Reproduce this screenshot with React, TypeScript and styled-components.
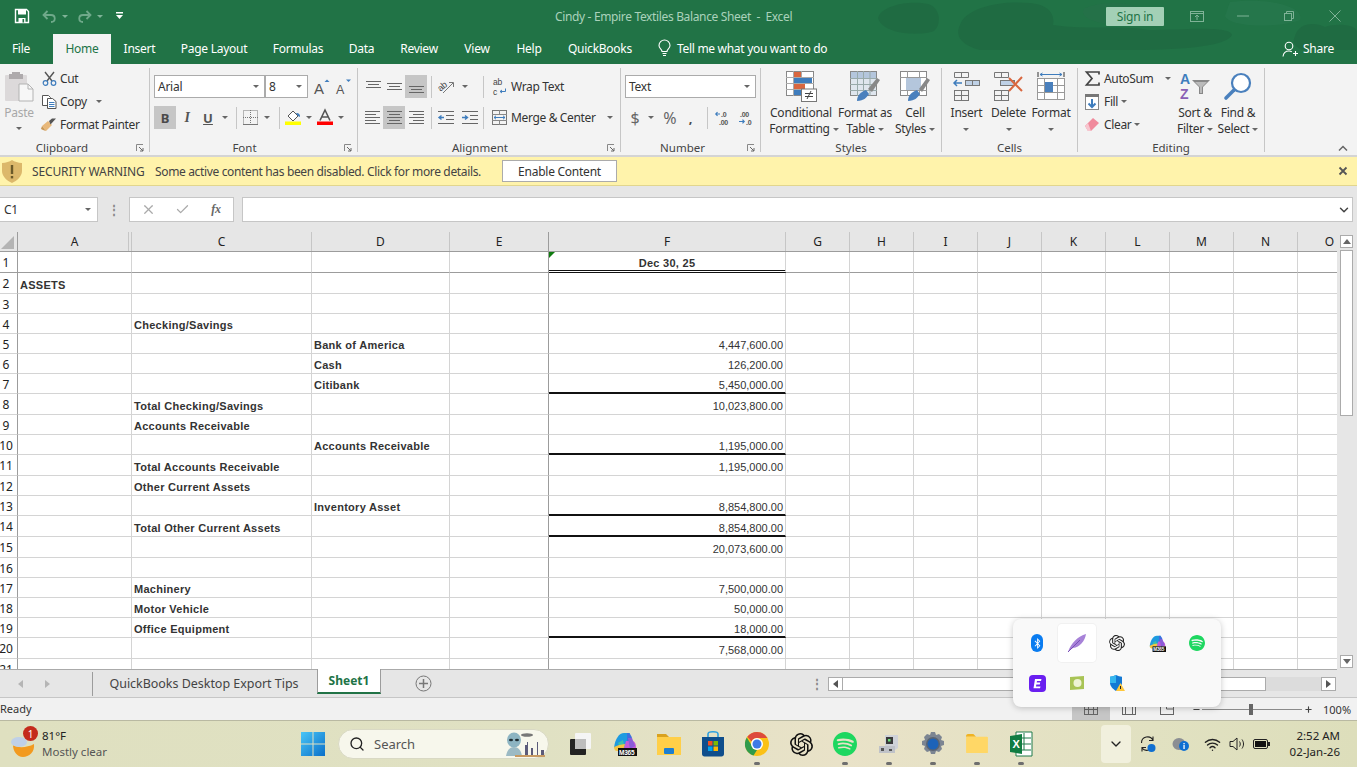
import React from "react";
import styled, { createGlobalStyle } from "styled-components";
import { Search, Wifi, ChevronDown, Plus, Minus, X, Check } from "lucide-react";
import { SiOpenai, SiSpotify } from "react-icons/si";
import { FaBluetoothB } from "react-icons/fa";

const UI = `"Noto Sans", "Open Sans", sans-serif`;
const CELL = `"Liberation Sans", Arial, sans-serif`;

const Global = createGlobalStyle`
  html, body { margin: 0; padding: 0; background: #fff; }
  * { box-sizing: border-box; }
  body { font-family: ${UI}; font-size: 12px; letter-spacing: -0.25px; color: #333; }
  svg { overflow: visible; }
`;

const Page = styled.div`
  position: relative; width: 1357px; height: 767px; overflow: hidden;
  display: flex; flex-direction: column; background: #e6e6e6;
`;

/* ---------- Title + tabs ---------- */
const Head = styled.header`
  position: relative; height: 64px; background: #217346; flex: none; overflow: hidden;
`;
const HeadArt = styled.svg`
  position: absolute; inset: 0; width: 1357px; height: 64px;
`;
const TitleBar = styled.div`
  position: relative; height: 32px; display: flex; align-items: center; padding-left: 14px;
`;
const Qat = styled.div`
  display: flex; align-items: center; flex: none; width: 541px;
`;
const QatSlot = styled.span<{ $w: number }>`
  width: ${p => p.$w}px; display: flex; align-items: center;
`;
const FadedCaret = styled.span`
  width: 0; height: 0; border-left: 3px solid transparent; border-right: 3px solid transparent;
  border-top: 3px solid #7fb397;
`;
const DocTitle = styled.div`
  width: 250px; flex: none; color: #aad2bb; font-size: 12px; white-space: pre; letter-spacing: -0.35px;
`;
const SignIn = styled.div`
  margin-left: 301px; width: 58px; height: 19px; flex: none; border-radius: 1px; background: #a3d0b6; color: #217346;
  display: flex; align-items: center; justify-content: center; font-size: 12px;
`;
const WinCtrls = styled.div`
  display: flex; align-items: center; margin-left: 20px; flex: none;
`;
const WinCtl = styled.span<{ $w: number; $pl?: number }>`
  width: ${p => p.$w}px; padding-left: ${p => p.$pl ?? 0}px; display: flex; justify-content: center; align-items: center;
`;
const TabBar = styled.nav`
  position: relative; height: 32px; display: flex; align-items: flex-end;
`;
const Tab = styled.div<{ $w: number; $ml?: number; $active?: boolean }>`
  width: ${p => p.$w}px; margin-left: ${p => p.$ml ?? 0}px; height: 30px; display: flex; align-items: center; justify-content: center;
  padding-bottom: 1px; white-space: nowrap;
  color: ${p => (p.$active ? "#217346" : "#fff")};
  background: ${p => (p.$active ? "#f3f3f3" : "transparent")};
`;
const TellMe = styled.div`
  display: flex; align-items: center; gap: 6px; height: 30px; color: #fff; padding-bottom: 1px; margin-left: 13px; letter-spacing: -0.3px;
`;
const ShareBox = styled.div`
  margin-left: auto; display: flex; align-items: center; gap: 5px; height: 30px; color: #fff; padding: 0 23px 1px 0;
`;

/* ---------- Ribbon ---------- */
const Ribbon = styled.section`
  height: 93px; flex: none; background: #f3f3f3; border-bottom: 2px solid #d4d4d4;
  padding-top: 4px; display: flex; position: relative;
`;
const Group = styled.div<{ $w: number; $pl?: number }>`
  position: relative; width: ${p => p.$w}px; flex: none; height: 87px; padding-left: ${p => p.$pl ?? 0}px;
  display: flex; flex-direction: column;
  &::after { content: ""; position: absolute; right: 0; top: 0; bottom: 3px; width: 1px; background: #c6c6c6; }
`;
const Body = styled.div`
  height: 72px; display: flex;
`;
const GroupLabel = styled.div<{ $pr?: number }>`
  position: absolute; left: 0; right: 1px; bottom: 0; height: 15px; padding-right: ${p => p.$pr ?? 0}px;
  display: flex; align-items: center; justify-content: center; color: #444; font-size: 11.5px;
  letter-spacing: 0;
`;
const Launcher = styled.svg`
  position: absolute; right: 5px; bottom: 3px; width: 8px; height: 8px;
`;
const Stack3 = styled.div<{ $w?: number; $pl?: number }>`
  display: flex; flex-direction: column; width: ${p => (p.$w ? `${p.$w}px` : "auto")}; padding-left: ${p => p.$pl ?? 0}px;
  margin-top: -1px;
`;
const SmallBtn = styled.div<{ $gap?: number }>`
  height: 23px; display: flex; align-items: center; gap: ${p => p.$gap ?? 2}px; color: #333; white-space: nowrap; letter-spacing: -0.35px;
`;
const SmallIcon = styled.span`
  width: 18px; display: flex; justify-content: center; align-items: center; flex: none;
`;
const PasteCol = styled.div`
  width: 36px; display: flex; flex-direction: column; align-items: center; color: #a8a8a8;
`;
const PasteBox = styled.div`
  height: 37px; display: flex; align-items: center;
`;
const PasteText = styled.div`
  line-height: 16px; font-size: 12px; margin-bottom: 6px;
`;
const Stack2 = styled.div`
  display: flex; flex-direction: column; gap: 8px; padding-top: 7px;
`;
const Line = styled.div`
  height: 23px; display: flex; align-items: center;
`;
const Select = styled.div<{ $w: number; $mr?: number }>`
  width: ${p => p.$w}px; height: 23px; margin-right: ${p => p.$mr ?? 0}px; background: #fff; border: 1px solid #ababab;
  display: flex; align-items: center; justify-content: space-between; padding: 0 5px 0 3px; color: #333;
`;
const Slot = styled.div<{ $w: number; $on?: boolean }>`
  width: ${p => p.$w}px; height: 23px; flex: none; display: flex; align-items: center; justify-content: center;
  background: ${p => (p.$on ? "#c6c6c6" : "transparent")}; color: #555;
`;
const VSep = styled.span<{ $l: number; $r: number }>`
  width: 1px; height: 22px; flex: none; background: #c6c6c6; margin: 0 ${p => p.$r}px 0 ${p => p.$l}px;
`;
const TextBtn = styled.div`
  display: flex; align-items: center; gap: 4px; color: #333; white-space: nowrap; letter-spacing: -0.35px;
`;
const Tri = styled.span<{ $ml?: number; $mr?: number }>`
  display: inline-block; width: 0; height: 0; flex: none; vertical-align: middle;
  border-left: 3px solid transparent; border-right: 3px solid transparent; border-top: 3px solid #666;
  margin-left: ${p => p.$ml ?? 0}px; margin-right: ${p => p.$mr ?? 0}px;
`;
const Bold = styled.b`font-size: 13px; color: #4a4a4a; letter-spacing: 0;`;
const Ital = styled.i`font-family: "Liberation Serif", serif; font-weight: 700; font-size: 14px; color: #555;`;
const Under = styled.u`font-size: 13px; font-weight: 700; color: #555; letter-spacing: 0;`;
const Glyph = styled.span<{ $s: number }>`font-size: ${p => p.$s}px; color: #666; letter-spacing: 0;`;
const BigRow = styled.div<{ $pl?: number }>`
  display: flex; padding-left: ${p => p.$pl ?? 0}px;
`;
const Big = styled.div<{ $w: number }>`
  width: ${p => p.$w}px; display: flex; flex-direction: column; align-items: center; color: #333;
`;
const BigIcon = styled.div`
  height: 37px; display: flex; align-items: center; justify-content: center; flex: none;
`;
const BigText = styled.div`
  line-height: 16px; text-align: center; white-space: nowrap;
`;
const Collapse = styled.svg`
  position: absolute; right: 9px; bottom: 4px; width: 10px; height: 6px;
`;

/* ---------- Security bar ---------- */
const Security = styled.div`
  height: 29px; flex: none; background: #fff3ab; border-bottom: 1px solid #e2d68e;
  display: flex; align-items: center; padding-left: 2px; color: #444; position: relative;
`;
const WarnTitle = styled.span`margin-left: 10px; width: 123px; white-space: nowrap; letter-spacing: -0.13px;`;
const WarnText = styled.span`width: 347px; white-space: nowrap; letter-spacing: -0.35px;`;
const EnableBtn = styled.div`
  width: 115px; height: 22px; background: #fff; border: 1px solid #ababab;
  display: flex; align-items: center; justify-content: center; color: #333;
`;
const CloseBar = styled.span`
  margin-left: auto; margin-right: 9px; display: flex;
`;

/* ---------- Formula bar ---------- */
const FormulaBar = styled.div`
  height: 46px; flex: none; padding-top: 11px; display: flex; align-items: flex-start; background: #e6e6e6;
`;
const NameBox = styled.div`
  width: 98px; height: 25px; background: #fff; border: 1px solid #c6c6c6; border-left: none;
  display: flex; align-items: center; justify-content: space-between; padding: 0 6px 0 4px; color: #333;
`;
const Grip = styled.span`
  width: 31px; height: 25px; display: flex; align-items: center; justify-content: center; color: #888; font-size: 12px; font-weight: 700;
`;
const FxBox = styled.div`
  width: 105px; height: 25px; background: #fff; border: 1px solid #c6c6c6; display: flex; align-items: center; padding-left: 1px;
`;
const FxSlot = styled.span`
  width: 36px; display: flex; align-items: center; justify-content: center;
  font-family: "Liberation Serif", serif; font-style: italic; font-weight: 700; color: #666; font-size: 12px;
`;
const FormulaInput = styled.div`
  margin-left: 8px; width: 1111px; height: 25px; background: #fff; border: 1px solid #c6c6c6;
  display: flex; align-items: center; justify-content: flex-end; padding-right: 1px;
`;

/* ---------- Sheet ---------- */
const Sheet = styled.div`
  flex: 1; min-height: 0; display: flex; background: #fff;
`;
const GridPane = styled.div`
  width: 1337px; height: 438px; overflow: hidden; border-bottom: 1px solid #aaa;
`;
const COLS = "18px 114px 180px 138px 99px 237px repeat(9, 64px)";
const ColHead = styled.div`
  display: grid; grid-template-columns: ${COLS}; height: 20px; background: #e6e6e6; border-bottom: 1px solid #9c9c9c;
`;
const HeadCell = styled.div<{ $strong?: boolean; $hidden?: boolean }>`
  position: relative; display: flex; align-items: center; justify-content: center; color: #222; font-size: 12px; letter-spacing: 0;
  border-right: 1px solid ${p => (p.$strong ? "#9c9c9c" : "#c6c6c6")};
  ${p => p.$hidden && `box-shadow: inset -2px 0 0 #e6e6e6, inset -3px 0 0 #c6c6c6;`}
`;
const Corner = styled.span`
  width: 0; height: 0; border-style: solid; border-width: 0 0 13px 13px; border-color: transparent transparent #b4b4b4 transparent;
  position: absolute; right: 3px; bottom: 2px;
`;
const Row = styled.div<{ $h: number }>`
  display: grid; grid-template-columns: ${COLS}; height: ${p => p.$h}px;
`;
const RowNum = styled.div<{ $strongBottom?: boolean }>`
  display: flex; align-items: center; justify-content: center; padding-right: 5px; padding-top: 1px; overflow: hidden; color: #222; font-size: 12px; letter-spacing: 0;
  border-right: 1px solid #9c9c9c;
  border-bottom: 1px solid ${p => (p.$strongBottom ? "#9c9c9c" : "#d4d4d4")};
`;
const Cell = styled.div<{ $num?: boolean; $center?: boolean; $strongRight?: boolean; $strongBottom?: boolean; $thick?: boolean; $double?: boolean }>`
  position: relative; display: flex; align-items: flex-end; min-width: 0; white-space: nowrap;
  justify-content: ${p => (p.$center ? "center" : p.$num ? "flex-end" : "flex-start")};
  font-family: ${CELL}; font-size: 11px; line-height: 13px; color: #333;
  font-weight: ${p => (p.$num && !p.$center ? 400 : 700)};
  letter-spacing: ${p => (p.$num && !p.$center ? "0" : "0.28px")};
  padding: 0 2px 1px 2px;
  border-right: 1px solid ${p => (p.$strongRight ? "#9c9c9c" : "#d4d4d4")};
  border-bottom: 1px solid ${p => (p.$strongBottom ? "#9c9c9c" : "#d4d4d4")};
  ${p => p.$thick && `border-bottom: 2px solid #111; padding-bottom: 0;`}
  ${p => p.$double && `border-bottom: 3px double #111; padding-bottom: 0;`}
`;
const GreenTick = styled.span`
  position: absolute; left: 0; top: 0; width: 0; height: 0;
  border-style: solid; border-width: 6px 6px 0 0; border-color: #0f7b0f transparent transparent transparent;
`;

const VScroll = styled.div`
  width: 20px; height: 438px; background: #e6e6e6; padding: 3px 4px 2px 3px; display: flex; flex-direction: column;
`;
const ScrollBtn = styled.div`
  width: 13px; height: 13px; flex: none; background: #fff; border: 1px solid #ababab; display: flex; align-items: center; justify-content: center;
`;
const VThumb = styled.div`
  width: 13px; height: 166px; margin-top: 2px; background: #fff; border: 1px solid #ababab; flex: none;
`;
const Grow = styled.div`flex: 1;`;

/* ---------- Sheet tabs ---------- */
const SheetTabs = styled.div`
  height: 28px; flex: none; display: flex; align-items: flex-start; background: #e6e6e6; border-bottom: 1px solid #c6c6c6;
  position: relative; color: #444;
`;
const NavArrows = styled.div`
  width: 93px; height: 24px; display: flex; align-items: center; padding-left: 18px; gap: 22px;
  border-right: 1px solid #9c9c9c; margin-top: 2px; flex: none;
`;
const TabPlain = styled.div`
  width: 224px; height: 27px; display: flex; align-items: center; justify-content: center; font-size: 12.5px; letter-spacing: -0.03px; color: #444; padding-right: 2px;
`;
const TabActive = styled.div`
  width: 64px; height: 25px; background: #fff; border-right: 1px solid #9c9c9c; border-left: 1px solid #9c9c9c; border-bottom: 2px solid #217346;
  display: flex; align-items: center; justify-content: center; color: #217346; font-weight: 700; font-size: 12px; margin-top: -1px; letter-spacing: 0;
`;
const AddSheet = styled.div`
  width: 84px; height: 27px; display: flex; align-items: center; justify-content: center;
`;
const Dots = styled.div`
  margin-left: 346px; width: 17px; height: 27px; display: flex; align-items: center; justify-content: flex-start; color: #888; font-weight: 700;
`;
const HScroll = styled.div`
  display: flex; align-items: center; margin-top: 7px; width: 508px; height: 14px; background: #dcdcdc;
`;
const HBtn = styled.div`
  width: 15px; height: 14px; flex: none; background: #fff; border: 1px solid #ababab; display: flex; align-items: center; justify-content: center;
`;
const HThumb = styled.div`
  width: 423px; height: 14px; background: #fff; border: 1px solid #ababab; border-left: none; flex: none;
`;
const SideTri = styled.span<{ $left?: boolean; $c?: string }>`
  width: 0; height: 0; flex: none; border-top: 4px solid transparent; border-bottom: 4px solid transparent;
  ${p => (p.$left ? `border-right: 5px solid ${p.$c ?? "#555"};` : `border-left: 5px solid ${p.$c ?? "#555"};`)}
`;
const DownTri = styled.span`
  width: 0; height: 0; border-left: 4px solid transparent; border-right: 4px solid transparent; border-top: 5px solid #666;
`;
const UpTri = styled.span`
  width: 0; height: 0; border-left: 4px solid transparent; border-right: 4px solid transparent; border-bottom: 5px solid #666;
`;

/* ---------- Status ---------- */
const StatusBar = styled.div`
  height: 22px; flex: none; background: #f1f1f1; display: flex; align-items: center; color: #333; font-size: 11px; letter-spacing: 0;
`;
const ReadyText = styled.span`margin-top: -1px;`;
const ViewBtn = styled.div<{ $on?: boolean }>`
  width: 38px; height: 22px; display: flex; align-items: center; justify-content: center; background: ${p => (p.$on ? "#c6c6c6" : "transparent")};
`;
const ViewGroup = styled.div`
  margin-left: auto; display: flex;
`;
const ZoomBox = styled.div`
  width: 171px; display: flex; align-items: center; padding-left: 6px; font-size: 11px;
`;
const SliderTrack = styled.div`
  position: relative; width: 100px; height: 1px; background: #8a8a8a; margin: 0 2px 0 1px;
`;
const SliderThumb = styled.span`
  position: absolute; left: 47px; top: -5px; width: 4px; height: 11px; background: #666;
`;
const ZoomPct = styled.span`margin-left: 10px;`;

/* ---------- Taskbar ---------- */
const Taskbar = styled.footer`
  height: 47px; flex: none; border-top: 1px solid #b9b9a2;
  background: linear-gradient(90deg, #dfe0c0 0%, #e0e1c3 40%, #e9e2c8 62%, #e1e1c1 85%, #dddebb 100%);
  display: flex; align-items: center; position: relative;
`;
const Weather = styled.div`
  width: 301px; height: 46px; display: flex; align-items: center; padding-left: 11px; flex: none;
`;
const WeatherIconBox = styled.div`
  position: relative; width: 26px; height: 26px; margin-top: 4px; flex: none;
`;
const Badge = styled.span`
  position: absolute; left: 12px; top: -7px; width: 15px; height: 15px; border-radius: 50%; background: #c42b1c; color: #fff;
  font-size: 10px; display: flex; align-items: center; justify-content: center; letter-spacing: 0;
`;
const WeatherText = styled.div`
  margin-left: 5px; line-height: 16px; font-size: 11.5px; letter-spacing: 0; color: #222;
`;
const WeatherSub = styled.div`color: #555;`;
const StartBtn = styled.div`
  width: 37px; display: flex; flex: none;
`;
const SearchPill = styled.div`
  position: relative; width: 211px; height: 30px; border-radius: 15px; background: #f7f7ec; border: 1px solid #d9d9c4; flex: none;
  display: flex; align-items: center; padding-left: 10px; color: #555; font-size: 13px; letter-spacing: 0; gap: 9px;
`;
const SearchArt = styled.svg`
  position: absolute; right: 1px; top: 1px; width: 46px; height: 26px;
`;
const TaskIcons = styled.div`
  margin-left: 10px; display: flex;
`;
const TaskItem = styled.div`
  position: relative; width: 44px; height: 46px; display: flex; align-items: center; justify-content: center;
`;
const RunDot = styled.span`
  position: absolute; bottom: 2px; left: 19px; width: 6px; height: 3px; border-radius: 2px; background: #6e6e6e;
`;
const Tray = styled.div`
  margin-left: 58px; display: flex; align-items: center; height: 46px; flex: none;
`;
const TrayChevron = styled.div`
  width: 30px; height: 38px; background: #f1f0dd; border-radius: 4px; display: flex; align-items: center; justify-content: center;
`;
const TraySlot = styled.div<{ $w: number }>`
  width: ${p => p.$w}px; display: flex; align-items: center; justify-content: center;
`;
const Clock = styled.div`
  width: 65px; text-align: right; line-height: 16px; font-size: 11.5px; letter-spacing: 0; color: #222; white-space: nowrap;
`;

/* ---------- Popup ---------- */
const Popup = styled.div`
  position: absolute; left: 1013px; top: 619px; width: 208px; height: 88px; background: #f9f9f9; border-radius: 8px;
  box-shadow: 0 1px 6px rgba(0,0,0,.22); padding: 4px; display: grid; grid-template-columns: repeat(5, 40px); grid-auto-rows: 40px;
`;
const PopItem = styled.div<{ $on?: boolean }>`
  display: flex; align-items: center; justify-content: center; border-radius: 4px; background: ${p => (p.$on ? "#fff" : "transparent")};
  ${p => p.$on && "margin: 1px; box-shadow: 0 0 0 1px #f1f1f1;"}
`;
const BtPill = styled.span`
  width: 12px; height: 18px; border-radius: 6px; background: #0a7cf0; display: flex; align-items: center; justify-content: center;
`;

/* ---------- Icons ---------- */
const SaveIcon = () => (
  <svg width="16" height="16" viewBox="0 0 16 16"><path d="M1.500 1.500h11l2 2v11h-13z" fill="none" stroke="#fff" strokeWidth="1.400"/><rect x="4" y="2" width="8" height="4.500" fill="#fff"/><rect x="4.500" y="10" width="7" height="4.500" fill="#fff"/><rect x="8.500" y="11" width="1.600" height="3.500" fill="#217346"/></svg>
);
const UndoIcon = ({ flip }: { flip?: boolean }) => (
  <svg width="15" height="13" viewBox="0 0 15 13" transform={flip ? "scale(-1,1)" : undefined}><path d="M5.500 1 1.500 5l4 4M2 5h7c5 0 5 7 0 7" fill="none" stroke="#6fa98a" strokeWidth="1.800"/></svg>
);
const QatMore = () => (
  <svg width="7" height="8" viewBox="0 0 7 8"><path d="M0 0h7v1.500H0zM0 3h7L3.500 7z" fill="#fff"/></svg>
);
const BulbIcon = () => (
  <svg width="13" height="17" viewBox="0 0 13 17" fill="none" stroke="#fff" strokeWidth="1.100"><path d="M4 11.500C4 9 1 8.500 1 5.500a5.500 5.500 0 0 1 11 0c0 3-3 3.500-3 6zM4.500 13.500h4M5 15.500h3"/></svg>
);
const ShareIcon = () => (
  <svg width="16" height="16" viewBox="0 0 16 16" fill="none" stroke="#fff" strokeWidth="1.100"><circle cx="7" cy="5" r="3.800"/><path d="M1 15.500c.5-3.500 3-5.500 6-5.500 1 0 2 .2 2.800.7M11 12.500h5M13.500 10v5"/></svg>
);
const PasteIcon = () => (
  <svg width="29" height="31" viewBox="0 0 29 31"><rect x="0" y="4" width="22" height="26" rx="1" fill="#dcd9da"/><path d="M7 3V1h8v2h3v5H4V3z" fill="#aeaaac"/><path d="M14 13h9l5 5v12H14z" fill="#f7f7f7" stroke="#b3b3b3"/><path d="M23 13v5h5" fill="none" stroke="#b3b3b3"/></svg>
);
const CutIcon = () => (
  <svg width="15" height="15" viewBox="0 0 15 15" fill="none"><path d="M3 1l7 9M12 1 5 10" stroke="#555" strokeWidth="1.400"/><circle cx="3.500" cy="12" r="2.300" stroke="#3f7dbd" strokeWidth="1.200"/><circle cx="11.500" cy="12" r="2.300" stroke="#3f7dbd" strokeWidth="1.200"/></svg>
);
const CopyIcon = () => (
  <svg width="15" height="14" viewBox="0 0 15 14" fill="#fff" stroke="#555"><path d="M.5.500h6l2 2v8H.5z"/><path d="M5.500 3.500h5l3.500 3v7h-8.500z"/><path d="M7 7.500h5.500M7 9.500h5.500M7 11.500h5.500" stroke="#3f7dbd"/></svg>
);
const PainterIcon = () => (
  <svg width="16" height="14" viewBox="0 0 16 14"><path d="M1 8 7 3l4 4-6 6z" fill="#e8b87a"/><path d="M1 8l4 5-3-1-2-1z" fill="#c99653"/><path d="M8 3l3-2.500 4 0-5.500 6z" fill="#555"/></svg>
);
const Launch = () => (
  <Launcher viewBox="0 0 8 8"><path d="M.5 7V.5H7" fill="none" stroke="#888"/><path d="M3 3l4 4M7 4v3H4" fill="none" stroke="#666"/></Launcher>
);
const GrowFont = ({ up }: { up?: boolean }) => (
  <svg width="16" height="15" viewBox="0 0 16 15"><text x="0" y="14.500" fontFamily="Liberation Sans" fontSize={up ? 15 : 12.500} fill="#555">A</text><path d={up ? "M10.500 3 13 .500 15.500 3z" : "M10 .5h5L12.500 3z"} fill="#3f7dbd"/></svg>
);
const BordersIcon = () => (
  <svg width="15" height="15" viewBox="0 0 15 15" fill="none" stroke="#777" strokeDasharray="1 1"><rect x=".5" y=".5" width="14" height="14"/><path d="M7.500 0v15M0 7.500h15"/><path d="M0 14.500h15" strokeDasharray="0"/></svg>
);
const FillIcon = () => (
  <svg width="17" height="15" viewBox="0 0 17 15"><path d="M3 6 8 1l5 5-5 5z" fill="#fff" stroke="#555"/><path d="M11 3c3 0 4 1 4 4l-2-1z" fill="#3f7dbd"/><rect y="11.500" width="16" height="3.500" fill="#ffff00"/></svg>
);
const FontColorIcon = () => (
  <svg width="16" height="15" viewBox="0 0 16 15"><path d="M3 10.500 8 0l5 10.500M5 7h6" fill="none" stroke="#555" strokeWidth="1.600"/><rect y="11.500" width="16" height="3.500" fill="#f00"/></svg>
);
const Lines = ({ pos, ys }: { pos: "l" | "c" | "r"; ys: number[] }) => (
  <svg width="15" height="15" viewBox="0 0 15 15" stroke="#666" strokeWidth="1">
    {ys.map((y, i) => {
      const short = i % 2 === 1;
      const x1 = short ? (pos === "l" ? 0 : pos === "c" ? 2 : 4) : 0;
      const x2 = short ? (pos === "l" ? 11 : pos === "c" ? 13 : 15) : 15;
      return <line key={i} x1={x1} x2={x2} y1={y} y2={y} />;
    })}
  </svg>
);
const OrientIcon = () => (
  <svg width="16" height="15" viewBox="0 0 16 15"><text x="0" y="10" transform="rotate(-40 5 8)" fontFamily="Liberation Sans" fontSize="9" fill="#444">ab</text><path d="M5 14 15 4M11 3.500h4.500V8" fill="none" stroke="#777"/></svg>
);
const IndentIcon = ({ inc }: { inc?: boolean }) => (
  <svg width="16" height="13" viewBox="0 0 16 13" stroke="#666"><path d="M0 .500h16M8 4.500h8M8 8.500h8M0 12.500h16"/><path d={inc ? "M0 6.500h5M3 4.500l2.500 2-2.500 2" : "M6 6.500H1M3.500 4.500 1 6.500l2.500 2"} fill="none" stroke="#3f7dbd" strokeWidth="1.400"/></svg>
);
const WrapIcon = () => (
  <svg width="14" height="17" viewBox="0 0 14 17"><text x="0" y="7" fontFamily="Liberation Sans" fontSize="8.500" fill="#444">ab</text><text x="0" y="16.500" fontFamily="Liberation Sans" fontSize="8.500" fill="#444">c</text><path d="M7 13.500h5.500v-3M7 13.500l2-1.500M7 13.500l2 1.500" fill="none" stroke="#3f7dbd"/></svg>
);
const MergeIcon = () => (
  <svg width="15" height="15" viewBox="0 0 15 15" fill="none"><rect x=".5" y=".5" width="14" height="14" stroke="#777"/><path d="M0 4.500h15M0 10.500h15M7.500 0v4.500M7.500 10.500V15" stroke="#888"/><path d="M2 7.500h11M4 5.800 2 7.500l2 1.700M11 5.800l2 1.700-2 1.700" stroke="#3f7dbd"/></svg>
);
const DecMore = () => (
  <svg width="16" height="15" viewBox="0 0 16 15"><text x="6" y="6.500" fontFamily="Liberation Sans" fontSize="7" fontWeight="700" fill="#555">.0</text><text x="4" y="15" fontFamily="Liberation Sans" fontSize="7" fontWeight="700" fill="#555">.00</text><path d="M5 4H1M2.500 2.200.8 4l1.700 1.800" fill="none" stroke="#3f7dbd" strokeWidth="1.200"/></svg>
);
const DecLess = () => (
  <svg width="16" height="15" viewBox="0 0 16 15"><text x="3" y="6.500" fontFamily="Liberation Sans" fontSize="7" fontWeight="700" fill="#555">.00</text><text x="9" y="15" fontFamily="Liberation Sans" fontSize="7" fontWeight="700" fill="#555">.0</text><path d="M2 11.500h5M5.500 9.700l1.700 1.800-1.700 1.800" fill="none" stroke="#3f7dbd" strokeWidth="1.200"/></svg>
);
const CondIcon = () => (
  <svg width="31" height="31" viewBox="0 0 31 31"><rect x=".5" y=".5" width="27" height="24" fill="#fff" stroke="#888"/><path d="M0 6.500h28M0 12.500h28M0 18.500h28M7.500 0v25M15.500 0v25" stroke="#aaa"/><rect x="8" y="1" width="7" height="5" fill="#d9673f"/><rect x="8" y="7" width="18" height="5" fill="#3f7dbd"/><rect x="8" y="13" width="11" height="5" fill="#d9673f"/><rect x="8" y="19" width="7" height="5" fill="#3f7dbd"/><rect x="15.500" y="18" width="15" height="12.500" fill="#fff" stroke="#777"/><path d="M19 22.500h8M19 25.500h8M25 20l-4 8" stroke="#444"/></svg>
);
const FmtTableIcon = () => (
  <svg width="31" height="31" viewBox="0 0 31 31"><rect x=".5" y=".5" width="26" height="24" fill="#dfe6ee" stroke="#888"/><rect x="1" y="1" width="25" height="6" fill="#b4c6dc"/><path d="M0 7.500h27M0 13.500h27M0 19.500h27M7.500 0v25M13.500 0v25M20 0v25" stroke="#9aa"/><path d="M18 18 27 7l3 2-8 12z" fill="#888"/><path d="M7 30c0-6 4-9 9-11l3 4c-2 3-5 7-12 7z" fill="#4a80bd"/></svg>
);
const CellStyleIcon = () => (
  <svg width="31" height="31" viewBox="0 0 31 31"><rect x=".5" y=".5" width="26" height="24" fill="#fff" stroke="#888"/><path d="M0 6.500h27M7.500 0v7M19.500 0v7M0 19.500h27M7.500 19v6M19.500 19v6" stroke="#999"/><rect x="6" y="7" width="15" height="12" fill="#b4c6dc"/><path d="M19 18 27 7l3 2-8 12z" fill="#888"/><path d="M8 30c0-6 4-9 9-11l3 4c-2 3-5 7-12 7z" fill="#4a80bd"/></svg>
);
const InsertIcon = () => (
  <svg width="28" height="30" viewBox="0 0 28 30" fill="none" stroke="#777"><path d="M1.500.500h14v5h-14zM8.500 0v5"/><rect x="1.500" y="18.500" width="14" height="10"/><path d="M8.500 18v11M1 23.500h15"/><rect x="12.500" y="8.500" width="14" height="5" fill="#bfd1e6"/><path d="M19.500 8v6"/><path d="M9 11H1M4 8 1 11l3 3" stroke="#3f7dbd" strokeWidth="1.500"/></svg>
);
const DeleteIcon = () => (
  <svg width="30" height="30" viewBox="0 0 30 30" fill="none" stroke="#777"><path d="M.500.500h14v5H.500zM7.500 0v5"/><rect x=".5" y="18.500" width="14" height="10"/><path d="M7.500 18v11M0 23.500h15"/><rect x="6.500" y="8.500" width="14" height="5" fill="#bfd1e6"/><path d="M15 6l13 13M28 5 15 19" stroke="#d9673f" strokeWidth="2"/></svg>
);
const FormatIcon = () => (
  <svg width="28" height="30" viewBox="0 0 28 30" fill="none" stroke="#999"><path d="M1 0v5M27 0v5" stroke="#333"/><path d="M3 2.500h22M5.500 1 3 2.500 5.500 4M22.500 1 25 2.500 22.500 4" stroke="#3f7dbd"/><rect x=".5" y="6.500" width="27" height="21" fill="#fff"/><path d="M7.500 6v21M20.500 6v21M0 13.500h28M0 20.500h28"/><rect x="8" y="10" width="8" height="10" fill="#4a80bd" stroke="none"/></svg>
);
const SigmaIcon = () => (
  <svg width="15" height="15" viewBox="0 0 15 15"><path d="M14 3.500V1H1.500L7 7.500 1.500 14H14v-2.500" fill="none" stroke="#444" strokeWidth="1.700"/></svg>
);
const FillDown = () => (
  <svg width="14" height="16" viewBox="0 0 14 16"><rect x=".5" y=".5" width="13" height="15" fill="#fff" stroke="#888"/><rect x="0" y="0" width="14" height="3" fill="#777"/><path d="M7 5v8M3.500 9.500 7 13l3.500-3.500" fill="none" stroke="#3f7dbd" strokeWidth="2"/></svg>
);
const EraserIcon = () => (
  <svg width="14" height="13" viewBox="0 0 14 13"><path d="M0 8 8 0l6 5-8 8H3z" fill="#f08a9c"/><path d="M0 8l3 5h3L3 5z" fill="#f7c6cf"/></svg>
);
const SortIcon = () => (
  <svg width="31" height="29" viewBox="0 0 31 29"><text x="0" y="12" fontFamily="Liberation Sans" fontWeight="700" fontSize="14" fill="#3f7dbd">A</text><text x="0" y="27" fontFamily="Liberation Sans" fontWeight="700" fontSize="14" fill="#8a5fb5">Z</text><path d="M12 8h18l-7 7v7h-4v-7z" fill="#888"/><path d="M15 10h12l-5 5v6h-2v-6z" fill="#bbb"/></svg>
);
const FindIcon = () => (
  <svg width="29" height="29" viewBox="0 0 29 29" fill="none"><circle cx="17" cy="11" r="9" stroke="#4a80bd" strokeWidth="2.200" fill="#fff"/><path d="M10 18 2 26" stroke="#4a80bd" strokeWidth="3.600" strokeLinecap="round"/></svg>
);
const ShieldWarn = () => (
  <svg width="20" height="23" viewBox="0 0 20 23"><path d="M10 0c2.500 1.700 6 2.700 10 3v8c0 5.500-5 9.700-10 12C5 20.700 0 16.500 0 11V3c4-.3 7.500-1.300 10-3z" fill="#dcb86b"/><rect x="8.800" y="5" width="2.400" height="9" fill="#6b5a2a"/><rect x="8.800" y="16" width="2.400" height="2.400" fill="#6b5a2a"/></svg>
);
const SmallX = () => (
  <svg width="10" height="10" viewBox="0 0 10 10"><path d="M1.500 1.500l7 7M8.500 1.500l-7 7" stroke="#555" strokeWidth="1.800"/></svg>
);
const WinLogo = () => (
  <svg width="24" height="24" viewBox="0 0 24 24"><defs><linearGradient id="wl" x1="0" y1="0" x2="1" y2="1"><stop offset="0" stopColor="#49c6f7"/><stop offset="1" stopColor="#0a6fc9"/></linearGradient></defs><path d="M0 0h11.500v11.500H0zM12.500 0H24v11.500H12.500zM0 12.500h11.500V24H0zM12.500 12.500H24V24H12.500z" fill="url(#wl)"/></svg>
);
const WeatherIcon = () => (
  <svg width="24" height="26" viewBox="0 0 24 26"><path d="M2 12c4 3 14 3 21-1 1 8-5 13-11 13C6 24 2 18 2 12z" fill="#f29a1f"/><ellipse cx="8" cy="9" rx="8" ry="5" fill="#bfd0e8"/></svg>
);
const TaskView = () => (
  <svg width="24" height="24" viewBox="0 0 24 24"><rect x="6" y="1" width="16" height="16" rx="1" fill="#f5f5f5"/><rect x="1" y="7" width="16" height="16" rx="1" fill="#222"/><rect x="6" y="7" width="11" height="10" fill="#bdbdbd"/></svg>
);
const CopilotIcon = ({ s = 24 }: { s?: number }) => (
  <svg width={s} height={s} viewBox="0 0 24 24"><path d="M1 16C2 7 6 1 11 1h6l-5 15z" fill="#1e9be0"/><path d="M14 1c3 0 4 2 5 5l-5 6z" fill="#3d6fe0"/><path d="M13 9h6c3 0 4 3 4 7H11z" fill="#c45ad8"/><path d="M15 6l4 0 3 8-5 3z" fill="#8a5cd8"/><path d="M5 11l5-3 1 5-3 4z" fill="#3cc2a8"/><path d="M1 15c0 2 1 4 3 4h6l2-7-6 1z" fill="#f4c542"/><rect x="5" y="16" width="19" height="8" fill="#111"/><text x="6" y="22.500" fontFamily="Liberation Sans" fontSize="6.500" fontWeight="700" fill="#fff">M365</text></svg>
);
const ExplorerIcon = () => (
  <svg width="24" height="24" viewBox="0 0 24 24"><path d="M0 2h9l3 3H0z" fill="#d9a21f"/><rect y="5" width="24" height="18" fill="#ffcf48"/><rect x="7" y="16" width="10" height="6" rx="1" fill="#1d7fd1"/></svg>
);
const StoreIcon = () => (
  <svg width="24" height="26" viewBox="0 0 24 26"><path d="M7 6V3c0-3 10-3 10 0v3" fill="none" stroke="#2c9fe0" strokeWidth="1.600"/><path d="M1 6h22v17c0 1.500-1 2.500-2.500 2.500h-17C2 25.500 1 24.500 1 23z" fill="#0f4e8c"/><rect x="7" y="10" width="4.500" height="4.500" fill="#f25022"/><rect x="12.500" y="10" width="4.500" height="4.500" fill="#7fba00"/><rect x="7" y="15.500" width="4.500" height="4.500" fill="#00a4ef"/><rect x="12.500" y="15.500" width="4.500" height="4.500" fill="#ffb900"/></svg>
);
const ChromeIcon = () => (
  <svg width="24" height="24" viewBox="0 0 24 24"><circle cx="12" cy="12" r="12" fill="#fbc116"/><path d="M12 0a12 12 0 0 1 10.400 6H12a6 6 0 0 0-5.500 3.600L2.300 4.800A12 12 0 0 1 12 0z" fill="#dd4a3d"/><path d="M1.800 5.500 7 14a6 6 0 0 0 5 4l-3.500 5.500A12 12 0 0 1 1.800 5.500z" fill="#319b4b"/><circle cx="12" cy="12" r="6" fill="#fff"/><circle cx="12" cy="12" r="4.500" fill="#3f7be6"/></svg>
);
const DeviceIcon = () => (
  <svg width="22" height="22" viewBox="0 0 22 22"><path d="M7 2h13v13l-3 2H7z" fill="#cfd2d8"/><rect x="8" y="4" width="7" height="7" fill="#3a3a3a"/><rect x="10" y="6" width="2.500" height="2.500" fill="#6bdc7a"/><path d="M1 13h16v7H1z" fill="#bfc2c8"/><rect x="3" y="15" width="3" height="3" fill="#555"/><rect x="11" y="16" width="3" height="2" fill="#555"/></svg>
);
const GearIcon = () => (
  <svg width="24" height="24" viewBox="0 0 24 24"><path d="M10 0h4l1 3 3-1 3 3-1 3 3 1v4l-3 1 1 3-3 3-3-1-1 3h-4l-1-3-3 1-3-3 1-3-3-1v-4l3-1-1-3 3-3 3 1z" fill="#7c8592"/><circle cx="12" cy="12" r="7" fill="#5b6470"/><circle cx="12" cy="12" r="5.500" fill="#1d63b8"/></svg>
);
const FolderIcon = () => (
  <svg width="22" height="20" viewBox="0 0 24 22"><path d="M0 2c0-1 1-2 2-2h6l3 3H0z" fill="#f0b323"/><rect y="3" width="24" height="18" rx="1" fill="#ffd766"/></svg>
);
const ExcelIcon = () => (
  <svg width="22" height="24" viewBox="0 0 22 24"><path d="M6 0h16v24H6z" fill="#fff"/><path d="M6 0h16v24H6zm8 1v5m0 0v6m0 0v6m-7-12h14M7 12h14M7 18h14" fill="none" stroke="#1f7a4a"/><path d="M0 4l12-2v20L0 20z" fill="#107c41"/><text x="2.500" y="16" fontFamily="Liberation Sans" fontWeight="700" fontSize="11" fill="#fff">X</text></svg>
);
const SyncIcon = () => (
  <svg width="18" height="18" viewBox="0 0 18 18"><path d="M2.500 8A6 6 0 0 1 14 5.500M14 1.500v4h-4M13.500 11A6 6 0 0 1 3 13M3 16.500v-4h4" fill="none" stroke="#222" strokeWidth="1.100"/><circle cx="12.500" cy="13" r="4" fill="#0f6fd1"/></svg>
);
const CloudInfo = () => (
  <svg width="18" height="16" viewBox="0 0 18 16"><ellipse cx="7" cy="8" rx="6.500" ry="6" fill="#8b8e93"/><circle cx="12" cy="10" r="5" fill="#0f6fd1"/><rect x="11.400" y="9" width="1.300" height="4" fill="#fff"/><rect x="11.400" y="7" width="1.300" height="1.300" fill="#fff"/></svg>
);
const SpeakerIcon = () => (
  <svg width="17" height="14" viewBox="0 0 17 14" fill="none" stroke="#222"><path d="M1 4.500h3L8 1v12L4 9.500H1z"/><path d="M10.500 4.500c1 1.500 1 3.500 0 5M13 2.500c2 3 2 6 0 9"/></svg>
);
const BatteryIcon = () => (
  <svg width="17" height="10" viewBox="0 0 17 10"><rect x=".5" y=".5" width="14" height="9" rx="1.500" fill="none" stroke="#222"/><rect x="2" y="2" width="11" height="6" fill="#111"/><rect x="15" y="3" width="2" height="4" fill="#222"/></svg>
);
const QuillIcon = () => (
  <svg width="20" height="20" viewBox="0 0 20 20"><path d="M1 19C4 10 11 3 19 1c-1 7-6 13-13 14l-3 2z" fill="#a782d8"/><path d="M1 19 13 7" stroke="#7a50b8" fill="none"/></svg>
);
const PurpleE = () => (
  <svg width="17" height="17" viewBox="0 0 17 17"><rect width="17" height="17" rx="4" fill="#6a1ff0"/><path d="M6 4h6.500l-.5 2H8l-.3 1.500h3.500l-.4 2H7.300L7 11.500h4.500l-.5 1.700H4.500z" fill="#fff"/></svg>
);
const GreenApp = () => (
  <svg width="16" height="16" viewBox="0 0 16 16"><path d="M1 2l14-1v13l-14 1z" fill="#a9c456"/><circle cx="8.500" cy="8" r="4" fill="#eef3d5"/></svg>
);
const DefenderWarn = () => (
  <svg width="16" height="16" viewBox="0 0 16 16"><path d="M7 0c2 1 4 1.500 6 1.700V8c0 3-3 6-6 8-3-2-6-5-6-8V1.700C3 1.500 5 1 7 0z" fill="#1479d4"/><path d="M7 0v8H1V1.700C3 1.500 5 1 7 0z" fill="#35b6ee"/><path d="M11.500 8 16 16H7z" fill="#ffc83d"/><rect x="11" y="11" width="1" height="3" fill="#222"/></svg>
);

/* ---------- Data ---------- */
const HEIGHTS = [21, 21, 20, 20, 20, 20, 20, 21, 20, 20, 21, 20, 20, 21, 21, 20, 20, 20, 20, 21, 20];
type RowData = { a?: string; c?: string; d?: string; f?: string; thick?: boolean; date?: boolean };
const ROWS: RowData[] = [
  { f: "Dec 30, 25", date: true },
  { a: "ASSETS" },
  {},
  { c: "Checking/Savings" },
  { d: "Bank of America", f: "4,447,600.00" },
  { d: "Cash", f: "126,200.00" },
  { d: "Citibank", f: "5,450,000.00", thick: true },
  { c: "Total Checking/Savings", f: "10,023,800.00" },
  { c: "Accounts Receivable" },
  { d: "Accounts Receivable", f: "1,195,000.00", thick: true },
  { c: "Total Accounts Receivable", f: "1,195,000.00" },
  { c: "Other Current Assets" },
  { d: "Inventory Asset", f: "8,854,800.00", thick: true },
  { c: "Total Other Current Assets", f: "8,854,800.00", thick: true },
  { f: "20,073,600.00" },
  {},
  { c: "Machinery", f: "7,500,000.00" },
  { c: "Motor Vehicle", f: "50,000.00" },
  { c: "Office Equipment", f: "18,000.00", thick: true },
  { f: "7,568,000.00" },
  {},
];
const EXTRA = ["G", "H", "I", "J", "K", "L", "M", "N", "O"];

export default function App() {
  return (
    <Page>
      <Global />
      <Head>
        <HeadArt viewBox="0 0 1357 64">
          <path d="M878 18c3-12 30-18 50-14 12 3 14 20 6 27-8 4-50 6-56-13z" fill="#1f6b42" />
          <path d="M960 25c5-17 40-25 70-22 20 2 25 12 23 22 32 5 67 0 97 5 30 0 80-5 82 5-4 10-42 15-102 15H980c-20-5-25-15-20-25z" fill="#1f6b42" />
          <path d="M1295 36c4-14 20-14 30-9 10-4 32-3 32 5v18h-55c-8-4-10-8-7-14z" fill="#1f6b42" />
          <path d="M1085 8c20-8 50-6 60 4 3 8-20 14-35 12-16-1-33-8-25-16z" fill="#266f49" opacity=".6" />
          <path d="M1230 2c40-5 75 5 70 18-20 8-70 8-75-4z" fill="#2a7a50" opacity=".5" />
        </HeadArt>
        <TitleBar>
          <Qat>
            <QatSlot $w={28}><SaveIcon /></QatSlot>
            <QatSlot $w={20}><UndoIcon /></QatSlot>
            <QatSlot $w={15}><FadedCaret /></QatSlot>
            <QatSlot $w={20}><UndoIcon flip /></QatSlot>
            <QatSlot $w={19}><FadedCaret /></QatSlot>
            <QatSlot $w={10}><QatMore /></QatSlot>
          </Qat>
          <DocTitle>{"Cindy - Empire Textiles Balance Sheet  -  Excel"}</DocTitle>
          <SignIn>Sign in</SignIn>
          <WinCtrls>
            <WinCtl $w={26}>
              <svg width="14" height="11" viewBox="0 0 14 11" fill="none" stroke="#7fb397"><rect x=".5" y=".5" width="13" height="10"/><path d="M0 2.500h14M7 9V4M5 6l2-2 2 2"/></svg>
            </WinCtl>
            <WinCtl $w={66}>
              <svg width="12" height="2" viewBox="0 0 12 2"><path d="M0 1h12" stroke="#7fb397"/></svg>
            </WinCtl>
            <WinCtl $w={26}>
              <svg width="10" height="10" viewBox="0 0 10 10" fill="none" stroke="#7fb397"><rect x=".5" y="2.500" width="7" height="7"/><path d="M2.500 2.500v-2h7v7h-2"/></svg>
            </WinCtl>
            <WinCtl $w={55} $pl={11}>
              <svg width="12" height="12" viewBox="0 0 12 12"><path d="M.5.500l11 11M11.500.500l-11 11" stroke="#7fb397"/></svg>
            </WinCtl>
          </WinCtrls>
        </TitleBar>
        <TabBar>
          <Tab $w={42}>File</Tab>
          <Tab $w={58} $ml={11} $active>Home</Tab>
          <Tab $w={57}>Insert</Tab>
          <Tab $w={92}>Page Layout</Tab>
          <Tab $w={76}>Formulas</Tab>
          <Tab $w={51}>Data</Tab>
          <Tab $w={64}>Review</Tab>
          <Tab $w={52}>View</Tab>
          <Tab $w={52}>Help</Tab>
          <Tab $w={90}>QuickBooks</Tab>
          <TellMe><BulbIcon />Tell me what you want to do</TellMe>
          <ShareBox><ShareIcon />Share</ShareBox>
        </TabBar>
      </Head>

      <Ribbon>
        <Group $w={150} $pl={1}>
          <Body>
            <PasteCol>
              <PasteBox><PasteIcon /></PasteBox>
              <PasteText>Paste</PasteText>
              <Tri />
            </PasteCol>
            <Stack3 $pl={3}>
              <SmallBtn><SmallIcon><CutIcon /></SmallIcon>Cut</SmallBtn>
              <SmallBtn><SmallIcon><CopyIcon /></SmallIcon>Copy<Tri $ml={7} /></SmallBtn>
              <SmallBtn><SmallIcon><PainterIcon /></SmallIcon>Format Painter</SmallBtn>
            </Stack3>
          </Body>
          <GroupLabel $pr={25}>Clipboard<Launch /></GroupLabel>
        </Group>

        <Group $w={208} $pl={4}>
          <Stack2>
            <Line>
              <Select $w={111}>Arial<Tri /></Select>
              <Select $w={43} $mr={3}>8<Tri /></Select>
              <Slot $w={22}><GrowFont up /></Slot>
              <Slot $w={22}><GrowFont /></Slot>
            </Line>
            <Line>
              <Slot $w={22} $on><Bold>B</Bold></Slot>
              <Slot $w={22}><Ital>I</Ital></Slot>
              <Slot $w={20}><Under>U</Under></Slot>
              <Slot $w={13}><Tri /></Slot>
              <VSep $l={5} $r={3} />
              <Slot $w={20}><BordersIcon /></Slot>
              <Slot $w={14}><Tri /></Slot>
              <VSep $l={5} $r={3} />
              <Slot $w={20}><FillIcon /></Slot>
              <Slot $w={12}><Tri /></Slot>
              <Slot $w={20}><FontColorIcon /></Slot>
              <Slot $w={12}><Tri /></Slot>
            </Line>
          </Stack2>
          <GroupLabel $pr={18}>Font<Launch /></GroupLabel>
        </Group>

        <Group $w={263} $pl={4}>
          <Stack2>
            <Line>
              <Slot $w={22}><Lines pos="c" ys={[2.5, 5.5, 8.5]} /></Slot>
              <Slot $w={21}><Lines pos="c" ys={[4.5, 7.5, 10.5]} /></Slot>
              <Slot $w={22} $on><Lines pos="c" ys={[7.5, 10.5, 13.5]} /></Slot>
              <VSep $l={4} $r={0} />
              <Slot $w={28}><OrientIcon /></Slot>
              <Slot $w={10}><Tri /></Slot>
              <VSep $l={13} $r={9} />
              <TextBtn><WrapIcon />Wrap Text</TextBtn>
            </Line>
            <Line>
              <Slot $w={21}><Lines pos="l" ys={[1.5, 4.5, 7.5, 10.5, 13.5]} /></Slot>
              <Slot $w={22} $on><Lines pos="c" ys={[1.5, 4.5, 7.5, 10.5, 13.5]} /></Slot>
              <Slot $w={22}><Lines pos="r" ys={[1.5, 4.5, 7.5, 10.5, 13.5]} /></Slot>
              <VSep $l={4} $r={0} />
              <Slot $w={28}><IndentIcon /></Slot>
              <Slot $w={20}><IndentIcon inc /></Slot>
              <VSep $l={3} $r={8} />
              <TextBtn><MergeIcon />Merge &amp; Center<Tri $ml={7} /></TextBtn>
            </Line>
          </Stack2>
          <GroupLabel $pr={18}>Alignment<Launch /></GroupLabel>
        </Group>

        <Group $w={140} $pl={4}>
          <Stack2>
            <Line><Select $w={131}>Text<Tri /></Select></Line>
            <Line>
              <Slot $w={20}><Glyph $s={16}>$</Glyph></Slot>
              <Slot $w={11}><Tri /></Slot>
              <Slot $w={28}><Glyph $s={16}>%</Glyph></Slot>
              <Slot $w={13}><Bold>,</Bold></Slot>
              <VSep $l={10} $r={4} />
              <Slot $w={22}><DecMore /></Slot>
              <Slot $w={22}><DecLess /></Slot>
            </Line>
          </Stack2>
          <GroupLabel $pr={16}>Number<Launch /></GroupLabel>
        </Group>

        <Group $w={181}>
          <BigRow $pl={3}>
            <Big $w={74}><BigIcon><CondIcon /></BigIcon><BigText>Conditional<br />Formatting<Tri $ml={3} $mr={-6} /></BigText></Big>
            <Big $w={54}><BigIcon><FmtTableIcon /></BigIcon><BigText>Format as<br />Table<Tri $ml={3} /></BigText></Big>
            <Big $w={46}><BigIcon><CellStyleIcon /></BigIcon><BigText>Cell<br />Styles<Tri $ml={3} /></BigText></Big>
          </BigRow>
          <GroupLabel>Styles</GroupLabel>
        </Group>

        <Group $w={136}>
          <BigRow $pl={4}>
            <Big $w={41}><BigIcon><InsertIcon /></BigIcon><BigText>Insert<br /><Tri /></BigText></Big>
            <Big $w={43}><BigIcon><DeleteIcon /></BigIcon><BigText>Delete<br /><Tri /></BigText></Big>
            <Big $w={42}><BigIcon><FormatIcon /></BigIcon><BigText>Format<br /><Tri /></BigText></Big>
          </BigRow>
          <GroupLabel>Cells</GroupLabel>
        </Group>

        <Group $w={187}>
          <Body>
            <Stack3 $w={96} $pl={5}>
              <SmallBtn $gap={3}><SmallIcon><SigmaIcon /></SmallIcon>AutoSum<Tri $ml={9} /></SmallBtn>
              <SmallBtn $gap={3}><SmallIcon><FillDown /></SmallIcon>Fill<Tri /></SmallBtn>
              <SmallBtn $gap={3}><SmallIcon><EraserIcon /></SmallIcon>Clear<Tri /></SmallBtn>
            </Stack3>
            <Big $w={42}><BigIcon><SortIcon /></BigIcon><BigText>Sort &amp;<br />Filter<Tri $ml={3} /></BigText></Big>
            <Big $w={44}><BigIcon><FindIcon /></BigIcon><BigText>Find &amp;<br />Select<Tri $ml={3} /></BigText></Big>
          </Body>
          <GroupLabel>Editing</GroupLabel>
        </Group>

        <Collapse viewBox="0 0 10 6"><path d="M1 5.500 5 1.500l4 4" fill="none" stroke="#666" strokeWidth="1.500" /></Collapse>
      </Ribbon>

      <Security>
        <ShieldWarn />
        <WarnTitle>SECURITY WARNING</WarnTitle>
        <WarnText>Some active content has been disabled. Click for more details.</WarnText>
        <EnableBtn>Enable Content</EnableBtn>
        <CloseBar><SmallX /></CloseBar>
      </Security>

      <FormulaBar>
        <NameBox>C1<Tri /></NameBox>
        <Grip>⋮</Grip>
        <FxBox>
          <FxSlot><X size={15} color="#aaa" /></FxSlot>
          <FxSlot><Check size={15} color="#aaa" /></FxSlot>
          <FxSlot>fx</FxSlot>
        </FxBox>
        <FormulaInput><ChevronDown size={14} color="#444" strokeWidth={2.500} /></FormulaInput>
      </FormulaBar>

      <Sheet>
        <GridPane>
          <ColHead>
            <HeadCell $strong><Corner /></HeadCell>
            <HeadCell $hidden>A</HeadCell>
            <HeadCell>C</HeadCell>
            <HeadCell>D</HeadCell>
            <HeadCell $strong>E</HeadCell>
            <HeadCell>F</HeadCell>
            {EXTRA.map(n => <HeadCell key={n}>{n}</HeadCell>)}
          </ColHead>
          {ROWS.map((r, i) => (
            <Row key={i} $h={HEIGHTS[i]}>
              <RowNum $strongBottom={i === 0}>{i + 1}</RowNum>
              <Cell $strongBottom={i === 0}>{r.a}</Cell>
              <Cell $strongBottom={i === 0}>{r.c}</Cell>
              <Cell $strongBottom={i === 0}>{r.d}</Cell>
              <Cell $strongBottom={i === 0} $strongRight />
              <Cell $num={!!r.f} $center={r.date} $thick={r.thick} $double={r.date}>
                {r.date && <GreenTick />}
                {r.f}
              </Cell>
              {EXTRA.map(n => <Cell key={n} $strongBottom={i === 0} />)}
            </Row>
          ))}
        </GridPane>
        <VScroll>
          <ScrollBtn><UpTri /></ScrollBtn>
          <VThumb />
          <Grow />
          <ScrollBtn><DownTri /></ScrollBtn>
        </VScroll>
      </Sheet>

      <SheetTabs>
        <NavArrows><SideTri $left $c="#b5b5b5" /><SideTri $c="#b5b5b5" /></NavArrows>
        <TabPlain>QuickBooks Desktop Export Tips</TabPlain>
        <TabActive>Sheet1</TabActive>
        <AddSheet>
          <svg width="17" height="17" viewBox="0 0 17 17" fill="none" stroke="#777"><circle cx="8.500" cy="8.500" r="7.500"/><path d="M8.500 4v9M4 8.500h9" strokeWidth="1.500"/></svg>
        </AddSheet>
        <Dots>⋮</Dots>
        <HScroll>
          <HBtn><SideTri $left /></HBtn>
          <HThumb />
          <Grow />
          <HBtn><SideTri /></HBtn>
        </HScroll>
      </SheetTabs>

      <StatusBar>
        <ReadyText>Ready</ReadyText>
        <ViewGroup>
          <ViewBtn $on>
            <svg width="14" height="11" viewBox="0 0 14 11" fill="none" stroke="#666"><rect x=".5" y=".5" width="13" height="10"/><path d="M0 5.500h14M4.500 0v11M9.500 0v11"/></svg>
          </ViewBtn>
          <ViewBtn>
            <svg width="14" height="12" viewBox="0 0 14 12" fill="none" stroke="#666"><rect x=".5" y=".5" width="13" height="11"/><rect x="3.500" y="3.500" width="7" height="8"/></svg>
          </ViewBtn>
          <ViewBtn>
            <svg width="14" height="12" viewBox="0 0 14 12" fill="none" stroke="#666"><rect x=".5" y=".5" width="13" height="11"/><path d="M6.500 0v6H14"/></svg>
          </ViewBtn>
          <ZoomBox>
            <Minus size={9} color="#444" strokeWidth={3} />
            <SliderTrack><SliderThumb /></SliderTrack>
            <Plus size={9} color="#444" strokeWidth={3} />
            <ZoomPct>100%</ZoomPct>
          </ZoomBox>
        </ViewGroup>
      </StatusBar>

      <Taskbar>
        <Weather>
          <WeatherIconBox><WeatherIcon /><Badge>1</Badge></WeatherIconBox>
          <WeatherText>81°F<WeatherSub>Mostly clear</WeatherSub></WeatherText>
        </Weather>
        <StartBtn><WinLogo /></StartBtn>
        <SearchPill>
          <Search size={16} color="#222" strokeWidth={2} />
          Search
          <SearchArt viewBox="0 0 46 26">
            <ellipse cx="13" cy="9" rx="7" ry="7.500" fill="#8db4c2" />
            <path d="M5 25c1-6 4-9 8-9s7 3 8 9z" fill="#9cbac4" />
            <ellipse cx="10" cy="9" rx="2" ry="1.300" fill="#1f2d33" />
            <ellipse cx="16" cy="9" rx="2" ry="1.300" fill="#1f2d33" />
            <ellipse cx="26" cy="4" rx="6" ry="1.800" fill="#777" />
            <path d="M24 25V14h2v-3h1v14zM30 25v-8h2v8zM36 25V11h1v14zM40 25v-6h3v6z" fill="#5b5b7a" />
            <path d="M14 24h30v2H14z" fill="#c79a63" />
          </SearchArt>
        </SearchPill>
        <TaskIcons>
          <TaskItem><TaskView /></TaskItem>
          <TaskItem><CopilotIcon /></TaskItem>
          <TaskItem><ExplorerIcon /></TaskItem>
          <TaskItem><StoreIcon /></TaskItem>
          <TaskItem><ChromeIcon /><RunDot /></TaskItem>
          <TaskItem><SiOpenai size={23} color="#111" /></TaskItem>
          <TaskItem><SiSpotify size={24} color="#1ed760" /><RunDot /></TaskItem>
          <TaskItem><DeviceIcon /><RunDot /></TaskItem>
          <TaskItem><GearIcon /><RunDot /></TaskItem>
          <TaskItem><FolderIcon /><RunDot /></TaskItem>
          <TaskItem><ExcelIcon /><RunDot /></TaskItem>
        </TaskIcons>
        <Tray>
          <TrayChevron><ChevronDown size={16} color="#222" /></TrayChevron>
          <TraySlot $w={34}><SyncIcon /></TraySlot>
          <TraySlot $w={32}><CloudInfo /></TraySlot>
          <TraySlot $w={30}><Wifi size={17} color="#222" /></TraySlot>
          <TraySlot $w={20}><SpeakerIcon /></TraySlot>
          <TraySlot $w={28}><BatteryIcon /></TraySlot>
          <Clock>2:52 AM<br />02-Jan-26</Clock>
        </Tray>
      </Taskbar>

      <Popup>
        <PopItem><BtPill><FaBluetoothB size={11} color="#fff" /></BtPill></PopItem>
        <PopItem $on><QuillIcon /></PopItem>
        <PopItem><SiOpenai size={16} color="#222" /></PopItem>
        <PopItem><CopilotIcon s={17} /></PopItem>
        <PopItem><SiSpotify size={16} color="#1ed760" /></PopItem>
        <PopItem><PurpleE /></PopItem>
        <PopItem><GreenApp /></PopItem>
        <PopItem><DefenderWarn /></PopItem>
      </Popup>
    </Page>
  );
}
